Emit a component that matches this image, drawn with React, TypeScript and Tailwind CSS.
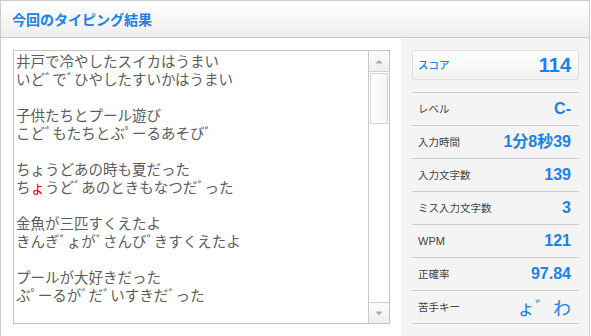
const BLUE = "#1a82e8";

type Seg = { t: string; red?: boolean };

const lines: Seg[][] = [
  [{ t: "井戸で冷やしたスイカはうまい" }],
  [{ t: "いどﾞでﾞひやしたすいかはうまい" }],
  [{ t: "\u00a0" }],
  [{ t: "子供たちとプール遊び" }],
  [{ t: "こどﾞもたちとぶﾟーるあそび" }, { t: "ﾞ", red: true }],
  [{ t: "\u00a0" }],
  [{ t: "ちょうどあの時も夏だった" }],
  [{ t: "ち" }, { t: "ょ", red: true }, { t: "うどﾞあのときもなつだﾞった" }],
  [{ t: "\u00a0" }],
  [{ t: "金魚が三匹すくえたよ" }],
  [{ t: "きんぎﾞょがﾞさんびﾞきすくえたよ" }],
  [{ t: "\u00a0" }],
  [{ t: "プールが大好きだった" }],
  [{ t: "ぶﾟーるがﾞだﾞいすきだﾞった" }],
];

const rows: { label: string; value: string; kana?: boolean }[] = [
  { label: "レベル", value: "C-" },
  { label: "入力時間", value: "1分8秒39" },
  { label: "入力文字数", value: "139" },
  { label: "ミス入力文字数", value: "3" },
  { label: "WPM", value: "121" },
  { label: "正確率", value: "97.84" },
  { label: "苦手キー", value: "ょﾞ\u2002わ", kana: true },
];

function Arrow({ up }: { up?: boolean }) {
  return (
    <svg width="8" height="5" viewBox="0 0 8 5">
      {up ? (
        <polygon points="0.5,4.5 4,0.8 7.5,4.5" fill="#a9a9a9" />
      ) : (
        <polygon points="0.5,0.5 4,4.2 7.5,0.5" fill="#a9a9a9" />
      )}
    </svg>
  );
}

function Scrollbar() {
  return (
    <div className="w-[21px] border-l border-[#c8c8c8] flex flex-col bg-white">
      <div className="h-[21px] border-b border-[#d0d0d0] bg-gradient-to-b from-[#fbfbfb] to-[#efefef] flex items-center justify-center">
        <Arrow up />
      </div>
      <div className="mx-[1px] mt-[1px] h-[51px] border border-[#d4d4d4] bg-gradient-to-r from-white to-[#f3f3f3]" />
      <div className="flex-1" />
      <div className="h-[21px] border-t border-[#d0d0d0] bg-gradient-to-b from-[#fbfbfb] to-[#efefef] flex items-center justify-center">
        <Arrow />
      </div>
    </div>
  );
}

export default function App() {
  return (
    <div className="w-[590px] border border-[#cccccc] bg-white font-['Liberation_Sans','Noto_Sans_CJK_JP',sans-serif]">
      <div className="h-[37px] border-b border-[#cccccc] bg-gradient-to-b from-white to-[#eeeeee] pl-[11px] flex items-center">
        <h1 className="text-[14px] font-bold leading-none text-[#1a82e8] font-['Noto_Sans_CJK_JP',sans-serif]">
          今回のタイピング結果
        </h1>
      </div>
      <div className="flex">
        <div className="w-[400px] pl-[12px] pr-[11px] pt-[12px] pb-[12px]">
          <div className="h-[274px] border border-[#c4c4c4] flex">
            <div className="flex-1 overflow-hidden pl-[2px] pt-[1px] text-[14.5px] leading-[18px] text-[#5c5c5c] font-['Noto_Sans_CJK_JP',sans-serif] whitespace-pre">
              {lines.map((segs, i) => (
                <div key={i} className="h-[18px] flex">
                  {segs.map((s, j) => (
                    <span
                      key={j}
                      className={
                        s.red
                          ? "inline-block h-[18px] leading-[18px] text-[#e00000]"
                          : "inline-block h-[18px] leading-[18px]"
                      }
                    >
                      {s.t}
                    </span>
                  ))}
                </div>
              ))}
            </div>
            <Scrollbar />
          </div>
        </div>
        <div className="w-[188px] bg-[#f4f4f4] pl-[11px] pr-[10px] pt-[12px] pb-[12px]">
          <div className="h-[30px] border border-[#dedede] rounded-[3px] bg-gradient-to-b from-white to-[#f1f1f1] flex items-center justify-between pl-[5px] pr-[7px]">
            <span className="text-[10.5px] font-medium text-[#1a82e8] font-['Noto_Sans_CJK_JP',sans-serif]">
              スコア
            </span>
            <span className="text-[20px] font-bold leading-none text-[#1a82e8]">114</span>
          </div>
          <div className="mt-[12px] border-b border-[#cdcdcd]">
            {rows.map((r) => (
              <div
                key={r.label}
                className="h-[33px] border-t border-[#cdcdcd] flex items-center justify-between pl-[6px] pr-[8px]"
              >
                <span
                  className={
                    r.label === "WPM"
                      ? "text-[11px] text-[#444444]"
                      : "text-[10.5px] text-[#444444] font-['Noto_Sans_CJK_JP',sans-serif]"
                  }
                >
                  {r.label}
                </span>
                {r.kana ? (
                  <span
                    className="text-[18px] leading-none font-['Noto_Sans_CJK_JP',sans-serif]"
                    style={{ color: BLUE }}
                  >
                    {r.value}
                  </span>
                ) : (
                  <span className="text-[16px] font-bold leading-none text-[#1a82e8]">{r.value}</span>
                )}
              </div>
            ))}
          </div>
        </div>
      </div>
    </div>
  );
}
